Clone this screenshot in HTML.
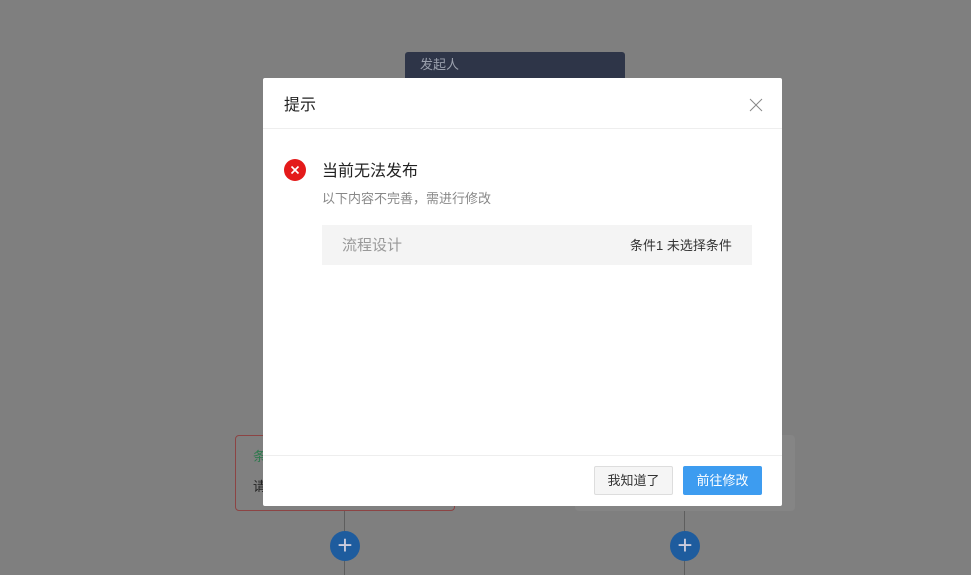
<!DOCTYPE html>
<html><head><meta charset="utf-8"><style>
*{margin:0;padding:0;box-sizing:border-box}
body{width:971px;height:575px;background:#7f7f7f;position:relative;overflow:hidden;font-family:"Liberation Sans","Noto Sans CJK SC",sans-serif}
.a{position:absolute}
</style></head><body>
<div class="a" style="left:405px;top:52px;width:220px;height:30px;background:#2e3548;border-radius:3px;color:#9aa0ad;font-size:13px;padding:2px 0 0 15px">发起人</div>
<div class="a" style="left:344px;top:505px;width:1px;height:70px;background:#5e5e5e"></div>
<div class="a" style="left:684px;top:505px;width:1px;height:70px;background:#5e5e5e"></div>
<div class="a" style="left:235px;top:435px;width:220px;height:76px;background:#808080;border:1px solid #8c4444;border-radius:4px"></div>
<div class="a" style="left:253px;top:446px;color:#2f7a4e;font-size:13px">条</div>
<div class="a" style="left:253px;top:476px;color:#222;font-size:13px">请</div>
<div class="a" style="left:575px;top:435px;width:220px;height:76px;background:#858585;border-radius:4px"></div>
<div class="a" style="left:330px;top:531px;width:30px;height:30px;border-radius:50%;background:#1e5c9e;color:#ccd;font-size:26px;line-height:28px;text-align:center">+</div>
<div class="a" style="left:670px;top:531px;width:30px;height:30px;border-radius:50%;background:#1e5c9e;color:#ccd;font-size:26px;line-height:28px;text-align:center">+</div>

<div class="a" style="left:263px;top:78px;width:519px;height:428px;background:#fff;border-radius:2px">
 <div class="a" style="left:21px;top:13px;font-size:16px;color:#222">提示</div>
 <svg class="a" style="left:486px;top:20px" width="14" height="14"><path d="M1 1L13 13M13 1L1 13" stroke="#888" stroke-width="1"/></svg>
 <div class="a" style="left:0;top:50px;width:519px;height:1px;background:#eee"></div>
 <svg class="a" style="left:21px;top:81px" width="22" height="22"><circle cx="11" cy="11" r="11" fill="#e41a1a"/><path d="M7.5 7.5L14.5 14.5M14.5 7.5L7.5 14.5" stroke="#fff" stroke-width="1.6"/></svg>
 <div class="a" style="left:59px;top:79px;font-size:16px;color:#222">当前无法发布</div>
 <div class="a" style="left:59px;top:110px;font-size:13px;color:#888">以下内容不完善，需进行修改</div>
 <div class="a" style="left:59px;top:147px;width:430px;height:40px;background:#f4f4f4"></div>
 <div class="a" style="left:79px;top:156px;font-size:15px;color:#999">流程设计</div>
 <div class="a" style="left:367px;top:157px;font-size:13px;color:#333">条件1 未选择条件</div>
 <div class="a" style="left:0;top:377px;width:519px;height:1px;background:#eee"></div>
 <div class="a" style="left:331px;top:388px;width:79px;height:29px;background:#f5f5f5;border:1px solid #ddd;border-radius:2px;font-size:13px;color:#333;text-align:center;line-height:27px">我知道了</div>
 <div class="a" style="left:420px;top:388px;width:79px;height:29px;background:#3d9cf0;border-radius:2px;font-size:13px;color:#fff;text-align:center;line-height:29px">前往修改</div>
</div>
</body></html>
